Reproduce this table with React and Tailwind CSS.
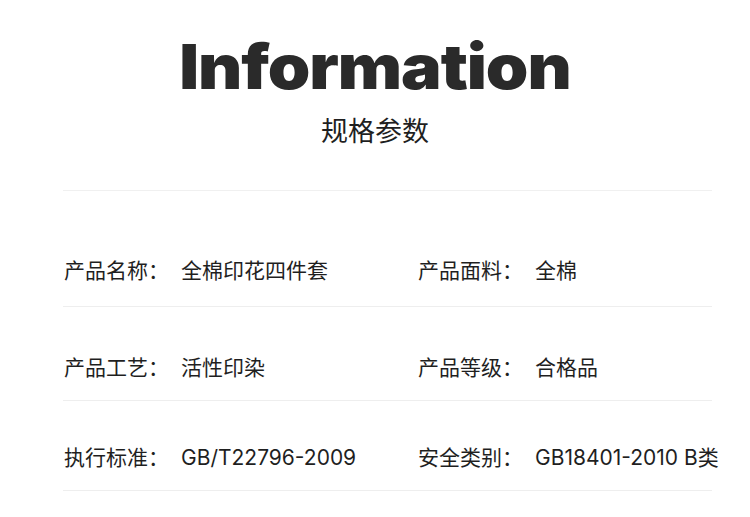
export default function App() {
  const rows = [
    { a: ["产品名称：", "全棉印花四件套"], b: ["产品面料：", "全棉"], cls: "pt-[66px] pb-[21px]" },
    { a: ["产品工艺：", "活性印染"], b: ["产品等级：", "合格品"], cls: "pt-[47px] pb-[18px]" },
    { a: ["执行标准：", "GB/T22796-2009"], b: ["安全类别：", "GB18401-2010 B类"], cls: "pt-[43px] pb-[18px]" },
  ];
  const cjk = { fontFamily: 'Inter, "Noto Sans CJK SC", sans-serif' };
  return (
    <div className="w-[750px] h-[517px] bg-white overflow-hidden text-[#1f1f1f]" style={cjk}>
      <div className="flex flex-col items-center pt-[31px]">
        <div className="text-[62px] leading-[72px] font-black tracking-[-1px] text-[#2a2a2a] scale-x-[1.1]">Information</div>
        <div className="mt-[11px] text-[27px] leading-[36px]">规格参数</div>
      </div>
      <div className="mx-[63px] w-[649px] mt-[40px] border-t border-[#f0f0f0]">
        {rows.map((r, i) => (
          <div key={i} className={`grid grid-cols-[354px_1fr] border-b border-[#eeeeee] ${r.cls}`}>
            {[r.a, r.b].map((c, j) => (
              <div key={j} className="flex items-center text-[21px] leading-[28px] whitespace-nowrap pl-[1px]">
                <span className="w-[117px] shrink-0">{c[0]}</span>
                <span>{c[1]}</span>
              </div>
            ))}
          </div>
        ))}
      </div>
    </div>
  );
}
